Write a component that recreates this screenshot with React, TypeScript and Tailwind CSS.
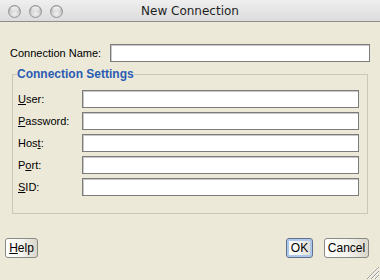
import React from "react";

function Light() {
  return (
    <svg width="13" height="13" viewBox="0 0 13 13">
      <defs>
        <radialGradient id="lg" cx="50%" cy="70%" r="60%">
          <stop offset="0%" stopColor="#f2f2f2" />
          <stop offset="70%" stopColor="#cdcdcd" />
          <stop offset="100%" stopColor="#acacac" />
        </radialGradient>
        <linearGradient id="hl" x1="0" y1="0" x2="0" y2="1">
          <stop offset="0%" stopColor="#ffffff" stopOpacity="0.95" />
          <stop offset="100%" stopColor="#ffffff" stopOpacity="0.1" />
        </linearGradient>
      </defs>
      <circle cx="6.5" cy="6.5" r="6" fill="url(#lg)" stroke="#959595" strokeWidth="1" />
      <ellipse cx="6.5" cy="4" rx="4" ry="2.6" fill="url(#hl)" />
    </svg>
  );
}

function Field({ label }: { label: React.ReactNode }) {
  return (
    <div className="flex items-center h-[18px]">
      <div className="w-[64px] text-[11px] text-black leading-none">{label}</div>
      <div className="w-[277px] h-[18px] bg-white border border-[#7c7c7c] shadow-[inset_1px_1px_0_#c8c8c8]" />
    </div>
  );
}

export default function App() {
  return (
    <div
      className="relative w-[380px] h-[280px] bg-[#ece9d8] flex flex-col overflow-hidden"
      style={{ fontFamily: "'Liberation Sans', Arial, sans-serif" }}
    >
      <div className="h-[22px] border-b border-[#8e8e8e] bg-gradient-to-b from-[#efefef] to-[#dcdcdc] grid grid-cols-[1fr_auto_1fr] items-center">
        <div className="flex gap-[8px] pl-[8px] pt-[1px]">
          <Light />
          <Light />
          <Light />
        </div>
        <div
          className="text-[12px] text-[#1e1e1e] leading-none"
          style={{ fontFamily: "'DejaVu Sans', sans-serif" }}
        >
          New Connection
        </div>
        <div />
      </div>

      <div className="mt-[22px] flex items-center pl-[10px]">
        <div className="w-[100px] text-[11px] text-black leading-none">Connection Name:</div>
        <div className="w-[260px] h-[18px] bg-white border border-[#7c7c7c] shadow-[inset_1px_1px_0_#c8c8c8]" />
      </div>

      <fieldset className="mx-[12px] mt-[5px] border border-[#cbc8b6] p-0 min-w-0">
        <legend className="ml-[4px] px-0 text-[12px] font-bold text-[#2b5cb3] leading-[14px]">
          Connection Settings
        </legend>
        <div className="flex flex-col gap-[4px] pl-[5px] pr-[8px] pt-[9px] pb-[17px]">
          <Field label={<><span className="underline">U</span>ser:</>} />
          <Field label={<><span className="underline">P</span>assword:</>} />
          <Field label={<>Hos<span className="underline">t</span>:</>} />
          <Field label={<>P<span className="underline">o</span>rt:</>} />
          <Field label={<><span className="underline">S</span>ID:</>} />
        </div>
      </fieldset>

      <div className="mt-[24px] flex items-center pl-[5px] pr-[11px]">
        <button className="w-[33px] h-[20px] rounded-[3px] border border-[#8a8a86] bg-gradient-to-r from-white via-[#f6f5f0] to-[#d9d6ca] text-[12px] text-black leading-none">
          <span className="underline">H</span>elp
        </button>
        <div className="flex-1" />
        <button className="w-[27px] h-[20px] rounded-[3px] border border-[#5f718f] bg-gradient-to-r from-white via-[#f4f4f2] to-[#dcdad0] shadow-[inset_0_0_0_2px_#aec6ea] text-[12px] text-black leading-none">
          OK
        </button>
        <button className="ml-[11px] w-[45px] h-[20px] rounded-[3px] border border-[#8a8a86] bg-gradient-to-r from-white via-[#f6f5f0] to-[#d9d6ca] text-[12px] text-black leading-none">
          Cancel
        </button>
      </div>

      <svg className="absolute right-[1px] bottom-[1px]" width="13" height="13" viewBox="0 0 13 13">
        <g strokeWidth="1">
          <line x1="1" y1="13" x2="13" y2="1" stroke="#9a9a9a" />
          <line x1="2" y1="13" x2="13" y2="2" stroke="#ffffff" />
          <line x1="5" y1="13" x2="13" y2="5" stroke="#9a9a9a" />
          <line x1="6" y1="13" x2="13" y2="6" stroke="#ffffff" />
          <line x1="9" y1="13" x2="13" y2="9" stroke="#9a9a9a" />
          <line x1="10" y1="13" x2="13" y2="10" stroke="#ffffff" />
        </g>
      </svg>
    </div>
  );
}
